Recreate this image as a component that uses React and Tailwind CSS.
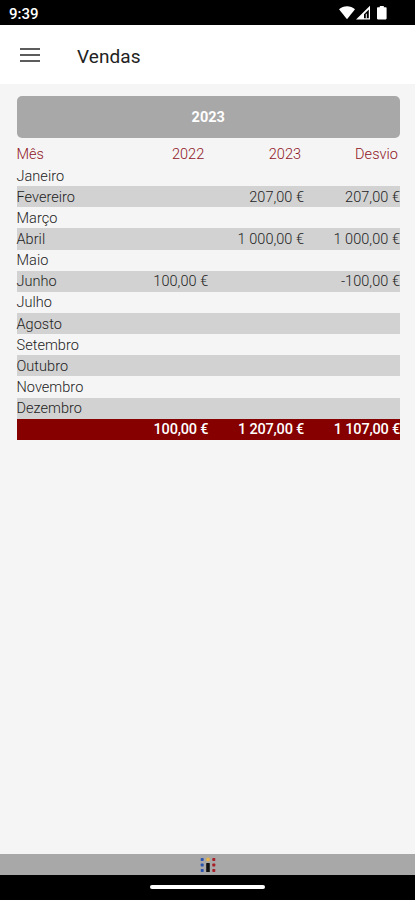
const rows = [
  ['Janeiro', '', '', ''],
  ['Fevereiro', '', '207,00 €', '207,00 €'],
  ['Março', '', '', ''],
  ['Abril', '', '1 000,00 €', '1 000,00 €'],
  ['Maio', '', '', ''],
  ['Junho', '100,00 €', '', '-100,00 €'],
  ['Julho', '', '', ''],
  ['Agosto', '', '', ''],
  ['Setembro', '', '', ''],
  ['Outubro', '', '', ''],
  ['Novembro', '', '', ''],
  ['Dezembro', '', '', ''],
];

function StatusBar() {
  return (
    <div className="flex h-[25px] shrink-0 items-center justify-between bg-black pl-[9px] pr-[28px] text-white">
      <span className="pt-[3px] text-[15px] leading-none font-medium">9:39</span>
      <svg width="48" height="16" viewBox="0 0 48 16" fill="#fff" className="mt-px">
        <path d="M0 4.2C4.4 .2 11.6 .2 16 4.2L8 14.2Z" />
        <path fillRule="evenodd" d="M31 .8V14.4H17ZM29.8 4.4L25 9.2V13.2H29.8Z" />
        <path d="M26.8 8.8h1v4.6h-1z" />
        <path d="M38.8 2.2h2V.9h4v1.3h2q.8 0 .8.8v10.6q0 .8-.8.8h-8q-.8 0-.8-.8V3q0-.8.8-.8Z" />
      </svg>
    </div>
  );
}

function Header() {
  return (
    <header className="flex h-[59px] shrink-0 items-center bg-white pl-[20px]">
      <button aria-label="Menu" className="flex w-[20px] flex-col gap-[4px]">
        <span className="h-[2px] bg-[#5c5c5c]" />
        <span className="h-[2px] bg-[#5c5c5c]" />
        <span className="h-[2px] bg-[#5c5c5c]" />
      </button>
      <h1 className="ml-[37px] mt-[3px] text-[19px] leading-none tracking-[0.1px] text-[#222]">Vendas</h1>
    </header>
  );
}

function Row({ cells, className }) {
  return (
    <div className={`grid h-[21.15px] grid-cols-4 items-center whitespace-nowrap ${className}`}>
      {cells.map((c, i) => (
        <span key={i} className={i === 0 ? 'pt-[1.6px]' : 'pt-[1.6px] text-right'}>{c}</span>
      ))}
    </div>
  );
}

function Logo() {
  return (
    <svg width="16" height="16" viewBox="0 0 16 16">
      {[1, 6.5, 12].map((y) => (
        <g key={y}>
          <rect x="0.7" y={y} width="3" height="3" rx="0.8" fill="#2b54b0" />
          <rect x="12.3" y={y} width="3" height="3" rx="0.8" fill="#a81e28" />
        </g>
      ))}
      <circle cx="8" cy="2.5" r="2" fill="#e6b450" />
      <rect x="6.2" y="6" width="3.6" height="9" rx="0.6" fill="#111" />
    </svg>
  );
}

export default function App() {
  return (
    <div className="flex h-[900px] w-[415px] flex-col overflow-hidden bg-[#f5f5f5] font-[Roboto,sans-serif]">
      <StatusBar />
      <Header />
      <main className="flex-1 pl-[16.5px] pr-[15px] pt-[12px]">
        <div className="flex h-[42px] items-center justify-center rounded-[5px] bg-[#a8a8a8] pt-[2px] text-[14.5px] font-bold text-white">
          2023
        </div>
        <div className="pt-[6px] text-[14.5px] leading-[20px] font-light tracking-[0.04px] text-[#222]">
          <div className="grid h-[21px] grid-cols-4 items-center text-[#8f1424]">
            <span className="pt-px">Mês</span>
            <span className="pr-[4px] pt-px text-right">2022</span>
            <span className="pr-[3px] pt-px text-right">2023</span>
            <span className="pr-[2px] pt-px text-right">Desvio</span>
          </div>
          {rows.map((r, i) => (
            <Row key={r[0]} cells={r} className={i % 2 ? 'bg-[#d2d2d2]' : ''} />
          ))}
          <Row cells={['', '100,00 €', '1 207,00 €', '1 107,00 €']} className="bg-[#870000] font-medium tracking-[-0.2px] text-white" />
        </div>
      </main>
      <footer className="flex h-[21px] shrink-0 items-center justify-center bg-[#a8a8a8]">
        <Logo />
      </footer>
      <div className="flex h-[25px] shrink-0 justify-center bg-black pt-[10px]">
        <div className="h-[4px] w-[115px] rounded-full bg-white" />
      </div>
    </div>
  );
}
